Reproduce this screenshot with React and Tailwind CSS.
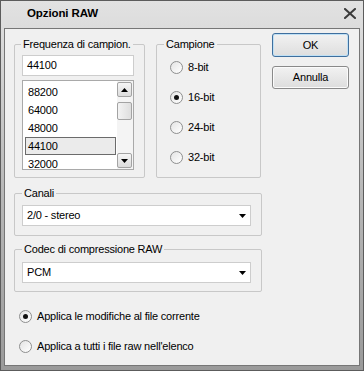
import React from "react";

function Radio({ checked }) {
  return (
    <span className="w-[13px] h-[13px] rounded-full border border-[#8e8f8f] bg-gradient-to-br from-[#e4e4e4] to-white flex items-center justify-center shrink-0">
      {checked && <span className="w-[5px] h-[5px] rounded-full bg-[#111]" />}
    </span>
  );
}

function DownTri() {
  return (
    <svg width="7" height="4" viewBox="0 0 7 4">
      <path d="M0 0H7L3.5 4Z" fill="#000" />
    </svg>
  );
}

function UpTri() {
  return (
    <svg width="7" height="4" viewBox="0 0 7 4">
      <path d="M0 4H7L3.5 0Z" fill="#000" />
    </svg>
  );
}

function Group({ label, className, labelLeft = "left-[6px]", children }) {
  return (
    <div className={"relative border border-[#c8c8c8] rounded-[2px] " + className}>
      <span className={"absolute -top-[8px] px-[2px] bg-[#f0f0f0] leading-[14px] whitespace-nowrap " + labelLeft}>
        {label}
      </span>
      {children}
    </div>
  );
}

function Select({ value }) {
  return (
    <div className="w-[229px] h-[21px] border border-[#cdcdcd] bg-white flex items-center justify-between pl-[4px] pr-[4px]">
      <span className="leading-none">{value}</span>
      <DownTri />
    </div>
  );
}

export default function App() {
  const items = ["88200", "64000", "48000", "44100", "32000"];
  return (
    <div className="w-[364px] h-[371px] flex flex-col border border-[#5c5c5c] bg-gradient-to-b from-[#e2e2e2] via-[#b9b9b9] to-[#9a9a9a] font-['Liberation_Sans',Arial,sans-serif] text-[11px] tracking-[-0.2px] text-black">
      <div className="h-[27px] shrink-0 flex items-center justify-between pl-[26px] pr-[7px] pb-[2px]">
        <span className="font-bold text-[11.5px] tracking-[-0.1px]">Opzioni RAW</span>
        <svg width="12" height="11" viewBox="0 0 12 11">
          <path d="M1 1L11 10M11 1L1 10" stroke="#3c3c3c" strokeWidth="2" strokeLinecap="square" />
        </svg>
      </div>
      <div className="flex-1 ml-[3px] mr-[3px] mb-[4px] border border-[#767676] bg-[#f0f0f0] pl-[9px] pt-[3px] flex flex-col">
        <div className="flex items-start">
          <Group label="Frequenza di campion." className="mt-[12px] w-[131px] h-[134px] pt-[10px] px-[7px] flex flex-col gap-[4px]">
            <div className="w-[112px] h-[21px] border border-[#cdcdcd] bg-white flex items-center pl-[4px]">
              44100
            </div>
            <div className="w-[112px] h-[90px] border border-[#a9a9a9] bg-white flex overflow-hidden">
              <div className="flex-1 flex flex-col pt-[2px] overflow-hidden">
                {items.map((it) => (
                  <div
                    key={it}
                    className={
                      "h-[18px] shrink-0 flex items-center ml-[2px] mr-[1px] pl-[2px] " +
                      (it === "44100" ? "border border-[#6b6b6b] bg-[#ebebeb]" : "border border-transparent")
                    }
                  >
                    {it}
                  </div>
                ))}
              </div>
              <div className="w-[16px] flex flex-col py-[1px] pr-[1px] bg-[#f4f4f4]">
                <div className="h-[15px] border border-[#a3a3a3] rounded-[2px] bg-gradient-to-b from-[#f6f6f6] to-[#dcdcdc] flex items-center justify-center">
                  <UpTri />
                </div>
                <div className="flex-1 flex flex-col pt-[5px]">
                  <div className="h-[18px] border border-[#a3a3a3] rounded-[2px] bg-gradient-to-r from-[#f3f3f3] to-[#dedede]" />
                </div>
                <div className="h-[15px] border border-[#a3a3a3] rounded-[2px] bg-gradient-to-b from-[#f6f6f6] to-[#dcdcdc] flex items-center justify-center">
                  <DownTri />
                </div>
              </div>
            </div>
          </Group>
          <Group label="Campione" labelLeft="left-[7px]" className="mt-[12px] ml-[11px] w-[105px] h-[134px] pt-[15px] pl-[13px] flex flex-col gap-[16px]">
            {["8-bit", "16-bit", "24-bit", "32-bit"].map((b) => (
              <div key={b} className="h-[14px] flex items-center gap-[5px]">
                <Radio checked={b === "16-bit"} />
                <span>{b}</span>
              </div>
            ))}
          </Group>
          <div className="ml-[11px] mt-[1px] flex flex-col gap-[9px]">
            <div className="w-[77px] h-[24px] rounded-[3px] border border-[#3f6f9e] bg-gradient-to-b from-[#f2f2f2] to-[#dedede] shadow-[inset_0_0_0_1px_#bfe0f5] flex items-center justify-center">
              OK
            </div>
            <div className="w-[77px] h-[23px] rounded-[3px] border border-[#8a8a8a] bg-gradient-to-b from-[#f2f2f2] to-[#dddddd] shadow-[inset_0_0_0_1px_#fbfbfb] flex items-center justify-center">
              Annulla
            </div>
          </div>
        </div>
        <Group label="Canali" labelLeft="left-[7px]" className="mt-[15px] w-[248px] h-[43px] pt-[11px] pl-[7px]">
          <Select value="2/0 - stereo" />
        </Group>
        <Group label="Codec di compressione RAW" labelLeft="left-[7px]" className="mt-[13px] w-[248px] h-[43px] pt-[12px] pl-[7px]">
          <Select value="PCM" />
        </Group>
        <div className="mt-[17px] ml-[5px] flex flex-col gap-[16px]">
          <div className="h-[14px] flex items-center gap-[5px]">
            <Radio checked />
            <span>Applica le modifiche al file corrente</span>
          </div>
          <div className="h-[14px] flex items-center gap-[5px]">
            <Radio />
            <span>Applica a tutti i file raw nell'elenco</span>
          </div>
        </div>
      </div>
    </div>
  );
}
